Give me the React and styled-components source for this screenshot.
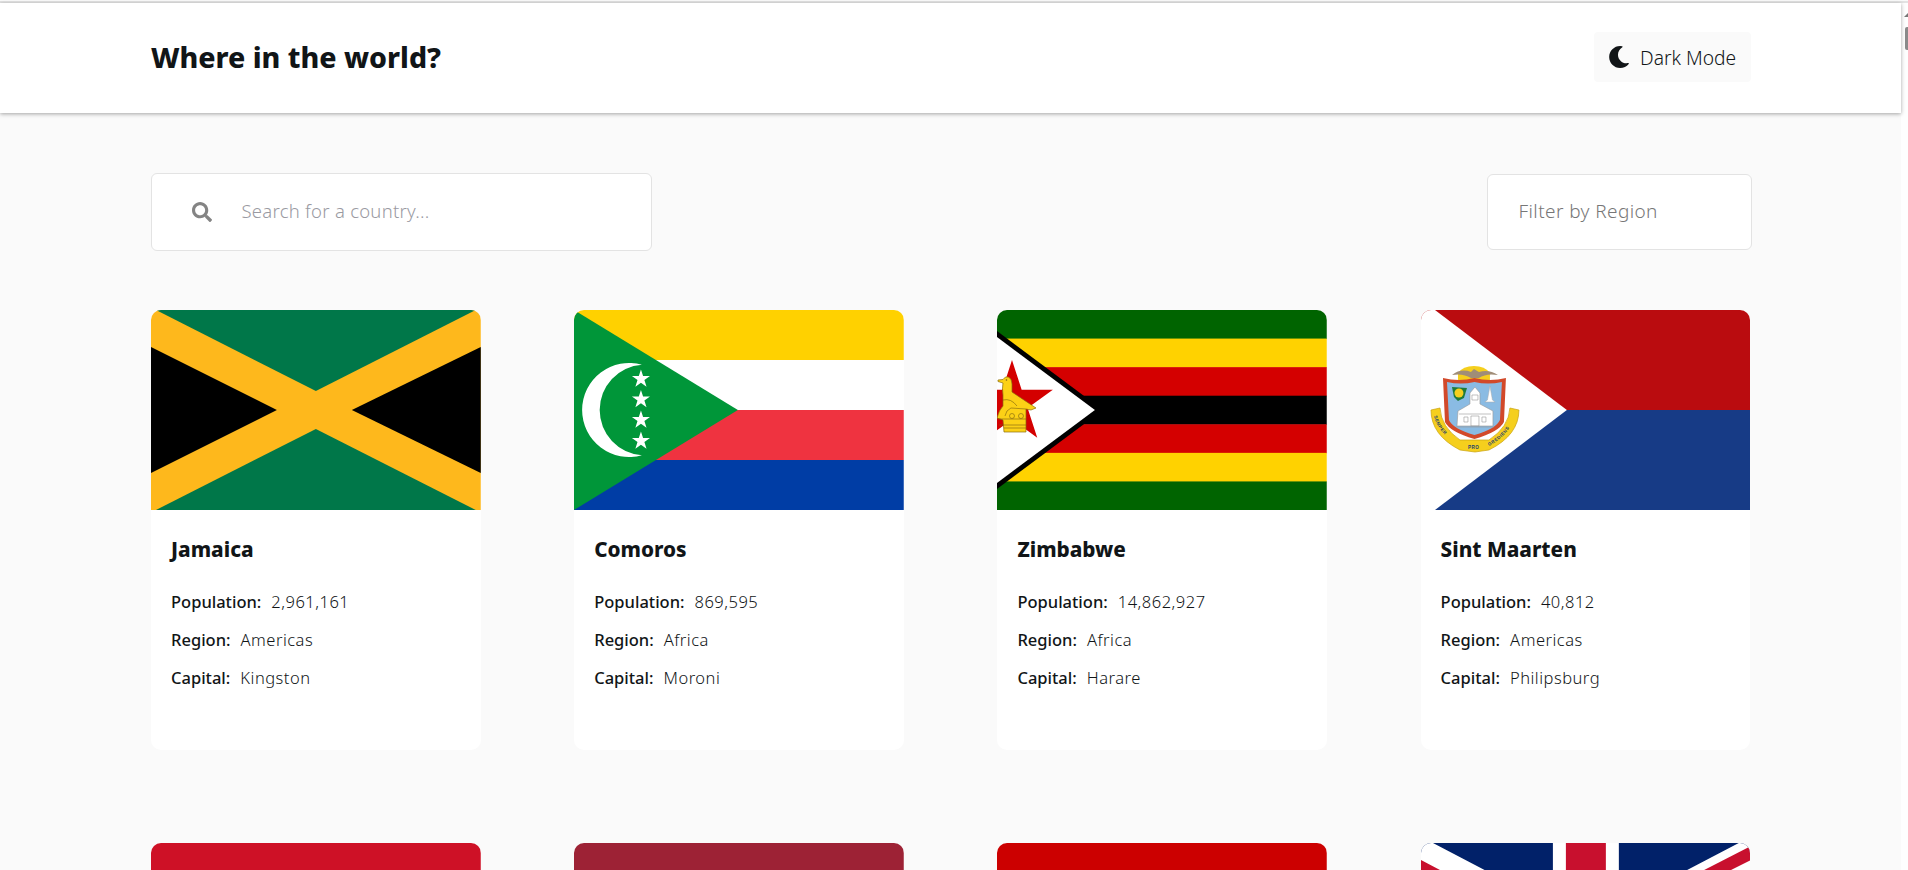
import React from "react";
import styled, { createGlobalStyle } from "styled-components";
import { FaMoon, FaSearch } from "react-icons/fa";

const FONT = `"Noto Sans", Lato, sans-serif`;

const Global = createGlobalStyle`
  html, body { margin: 0; height: 870px; overflow: hidden; background: #fafafa; }
  * { box-sizing: border-box; }
  body { font-family: ${FONT}; color: #111517; }
`;

const Shell = styled.div`
  height: 870px;
  display: flex;
  flex-direction: column;
  overflow: hidden;
`;
const TopRule = styled.div`
  flex: none;
  height: 2px;
  margin-top: 1px;
  background: #e3e3e3;
`;
const Body = styled.div`
  flex: 1;
  min-height: 0;
  display: flex;
`;
const Content = styled.div`
  flex: 1;
  min-width: 0;
  display: flex;
  flex-direction: column;
`;
const Header = styled.header`
  flex: none;
  height: 110px;
  padding: 0 150px 0 151px;
  background: #fff;
  box-shadow: 0 1px 4px rgba(0, 0, 0, 0.35);
  display: flex;
  align-items: center;
  justify-content: space-between;
  position: relative;
  z-index: 1;
`;
const Title = styled.h1`
  margin: 0 0 2px;
  font-size: 28.5px;
  font-weight: 800;
  line-height: 1.2;
  color: #111517;
`;
const ModeButton = styled.button`
  width: 157px;
  height: 50px;
  padding: 0 0 0 14px;
  border: 0;
  border-radius: 4px;
  background: #fafafa;
  color: #111517;
  display: flex;
  align-items: center;
  gap: 10px;
  font: 300 19.2px ${FONT};
  margin-top: -2px;
`;
const Main = styled.main`
  flex: 1;
  min-height: 0;
  padding: 60px 150px 0 151px;
  overflow: hidden;
`;
const Toolbar = styled.div`
  display: flex;
  align-items: center;
  justify-content: space-between;
  margin-bottom: 59px;
`;
const Search = styled.label`
  width: 501px;
  height: 78px;
  margin-left: -0.5px;
  padding-left: 40px;
  display: flex;
  align-items: center;
  gap: 30px;
  background: #fff;
  border: 1px solid #e3e3e3;
  border-radius: 6px;
  color: #848484;
`;
const SearchInput = styled.input`
  flex: 1;
  min-width: 0;
  border: 0;
  outline: 0;
  padding: 0 0 4px;
  background: transparent;
  font: 300 18.5px ${FONT};
  letter-spacing: 0.26px;
  &::placeholder { color: #9a9aa2; opacity: 1; }
`;
const Filter = styled.div`
  width: 265px;
  height: 76px;
  margin: 0 -0.5px 1px 0;
  padding: 0 0 2px 31px;
  display: flex;
  align-items: center;
  background: #fff;
  border: 1px solid #e3e3e3;
  border-radius: 6px;
  font-size: 19px;
  letter-spacing: 0.4px;
  font-weight: 300;
  color: #777;
`;
const Grid = styled.div`
  margin-right: 0.65px;
  display: grid;
  grid-template-columns: repeat(4, 329.75px);
  justify-content: space-between;
  row-gap: 93px;
`;
const Card = styled.article`
  height: ${(p) => (p.$bare ? "200px" : "440px")};
  background: #fff;
  border-radius: 10px;
  overflow: hidden;
`;
const Flag = styled.svg`
  display: block;
  width: 100%;
  height: 200px;
`;
const CardBody = styled.div`
  padding: 24px 20px 0;
`;
const CardName = styled.h2`
  margin: 0 0 18.5px;
  font-size: 20.7px;
  line-height: 30px;
  font-weight: 800;
  color: #111517;
`;
const Row = styled.p`
  margin: 0;
  height: 38px;
  display: flex;
  align-items: center;
  gap: 10px;
  font-size: 16.5px;
  font-weight: 300;
  color: #111517;
`;
const Label = styled.span`
  font-weight: 500;
`;
const Value = styled.span`
  letter-spacing: 0.5px;
`;
const ScrollTrack = styled.div`
  flex: none;
  width: 7px;
  background: #fefefe;
  display: flex;
  flex-direction: column;
  align-items: flex-end;
  padding-top: 10px;
`;
const ScrollArrow = styled.div`
  width: 0;
  height: 0;
  border-left: 4px solid transparent;
  border-bottom: 4px solid #777;
`;
const ScrollThumb = styled.div`
  width: 3px;
  height: 23px;
  margin-top: 10px;
  background: #8a8a8a;
  border-radius: 2px 0 0 2px;
`;
const Motto = styled.text`
  font-family: "Liberation Sans", sans-serif;
  font-size: 4.6px;
  font-weight: 700;
  letter-spacing: 0.5px;
  fill: #22406e;
`;

const star = (cx, cy, R, r = R * 0.382) =>
  Array.from({ length: 10 }, (_, i) => {
    const a = -Math.PI / 2 + (i * Math.PI) / 5;
    const d = i % 2 ? r : R;
    return `${(cx + d * Math.cos(a)).toFixed(2)},${(cy + d * Math.sin(a)).toFixed(2)}`;
  }).join(" ");

const Jamaica = () => (
  <Flag viewBox="0 0 330 200" preserveAspectRatio="none">
    <rect width="330" height="200" fill="#feb81c" />
    <polygon points="5,0 325,0 165,81" fill="#007749" />
    <polygon points="5,200 325,200 165,119" fill="#007749" />
    <polygon points="0,37 126,100 0,163" fill="#000" />
    <polygon points="330,37 201,100 330,163" fill="#000" />
  </Flag>
);

const Comoros = () => (
  <Flag viewBox="0 0 330 200" preserveAspectRatio="none">
    <rect width="330" height="50" fill="#ffd100" />
    <rect y="50" width="330" height="50" fill="#fff" />
    <rect y="100" width="330" height="50" fill="#ef3340" />
    <rect y="150" width="330" height="50" fill="#003da5" />
    <polygon points="0,0 164,100 0,200" fill="#009639" />
    <path d="M68,54.8 A47,47 0 1 0 68,145.2 A45.3,45.3 0 0 1 68,54.8 Z" fill="#fff" />
    {[69, 89.5, 110, 131].map((y) => (
      <polygon key={y} points={star(67, y, 9.5)} fill="#fff" />
    ))}
  </Flag>
);

const Zimbabwe = () => (
  <Flag viewBox="0 0 330 200" preserveAspectRatio="none">
    {["#006400", "#ffd200", "#d40000", "#000", "#d40000", "#ffd200", "#006400"].map((c, i) => (
      <rect key={i} y={(i * 200) / 7} width="330" height={200 / 7 + 0.5} fill={c} />
    ))}
    <polygon points="0,21 106,100 0,179" fill="#000" />
    <polygon points="0,27 98,100 0,173" fill="#fff" />
    <polygon points={star(15, 93, 43)} fill="#d40000" />
    <path
      d="M1,70 L6,69.5 Q8,66 11.5,67 Q15,69 15,74 L15,82 Q24,88 39,98 L34,100 L29,99 L29,122 L7,122 L6,110 L0,108 Q2,100 6,96 L6,85 Q5,78 6,73 L1,71.5 Z"
      fill="#fcd116"
      stroke="#8a6d10"
      strokeWidth="0.7"
    />
    <path d="M6,90 Q14,88 20,96 M29,99 L14,98 Q9,100 8,106 M1,109 L29,109 M2,115 L29,115 M7,118 L29,118" fill="none" stroke="#7a5f10" strokeWidth="0.6" />
    <circle cx="15" cy="106" r="2.5" fill="none" stroke="#7a5f10" strokeWidth="0.6" />
    <circle cx="24" cy="106" r="2.5" fill="none" stroke="#7a5f10" strokeWidth="0.6" />
    <circle cx="9.5" cy="70" r="0.8" fill="#7a5f10" />
  </Flag>
);

const SintMaarten = () => (
  <Flag viewBox="0 0 330 200" preserveAspectRatio="none">
    <rect width="330" height="100" fill="#ba0c0f" />
    <rect y="100" width="330" height="100" fill="#173b86" />
    <polygon points="0,0 14,0 146,100 14,200 0,200" fill="#fff" />
    <path d="M10,100 L19,98 Q20,117 39,130 L68,130 Q88,117 89,98 L98,100 Q98,125 68,140 L54,142 L39,140 Q10,125 10,100 Z" fill="#f5cf1d" stroke="#c9a20f" strokeWidth="0.7" />
    <defs>
      <path id="sxm-motto-l" d="M13,106 Q17,124 39,135" />
      <path id="sxm-motto-r" d="M68,136 Q90,124 95,102" />
    </defs>
    <Motto><textPath href="#sxm-motto-l">SEMPER</textPath></Motto>
    <Motto x="47" y="139">PRO</Motto>
    <Motto><textPath href="#sxm-motto-r">GREDIENS</textPath></Motto>
    <path d="M37,63 A18,13 0 0 1 69,63 L69,70 L37,70 Z" fill="#f5cf1d" />
    <path d="M31,65 Q40,58 50,62 L53,59 L58,62 Q68,59 77,65 Q65,63 58,68 L50,68 Q42,63 31,65 Z" fill="#a08d78" />
    <path d="M22,68 Q38,72 53.5,68 Q69,72 85,68 L83,112 Q78,122 53.5,129 Q29,122 24,112 Z" fill="#d2492a" />
    <path d="M26,72 Q40,75 53.5,72 Q67,75 81,72 L79,110 Q75,119 53.5,125 Q32,119 28,110 Z" fill="#8abbe3" />
    <path d="M31,77 L46,78 L43,88 L37,91 L33,87 Z" fill="#1f7a3a" />
    <circle cx="38" cy="83" r="4.5" fill="#f5cf1d" />
    <path d="M66.5,90 L69,76 L71.5,90 L74,92 L64,92 Z" fill="#fff" stroke="#aaa" strokeWidth="0.5" />
    <path d="M49,94 L49,83 L54,77 L59,83 L59,94 L72,101 L72,116 L36,116 L37,101 Z" fill="#fff" stroke="#999" strokeWidth="0.6" />
    <path d="M35,117 L73,117 M38,104 L70,104 M43,107 H47 V112 H43 Z M61,107 H65 V112 H61 Z M50,106 H58 V116 H50 Z M51,85 H57 V90 H51 Z" fill="none" stroke="#999" strokeWidth="0.6" />
  </Flag>
);

const Plain = ({ color }) => (
  <Flag viewBox="0 0 330 200" preserveAspectRatio="none">
    <rect width="330" height="200" fill={color} />
  </Flag>
);

const Britain = () => (
  <Flag viewBox="0 0 330 200" preserveAspectRatio="none">
    <rect width="330" height="200" fill="#012169" />
    <polygon points="0,0 12,0 165,80 318,0 330,0 330,34 198,100 330,166 330,200 318,200 165,120 12,200 0,200 0,166 132,100 0,34" fill="#fff" />
    <polygon points="0,17 19,27 165,100 140,100 0,30" fill="#c8102e" />
    <polygon points="330,3 165,88 190,88 330,17" fill="#c8102e" />
    <rect x="132" width="66" height="200" fill="#fff" />
    <rect y="67" width="330" height="66" fill="#fff" />
    <rect x="145" width="40" height="200" fill="#c8102e" />
    <rect y="80" width="330" height="40" fill="#c8102e" />
  </Flag>
);

const countries = [
  { name: "Jamaica", population: "2,961,161", region: "Americas", capital: "Kingston", flag: <Jamaica /> },
  { name: "Comoros", population: "869,595", region: "Africa", capital: "Moroni", flag: <Comoros /> },
  { name: "Zimbabwe", population: "14,862,927", region: "Africa", capital: "Harare", flag: <Zimbabwe /> },
  { name: "Sint Maarten", population: "40,812", region: "Americas", capital: "Philipsburg", flag: <SintMaarten /> },
];
const nextRow = [<Plain color="#ce1126" />, <Plain color="#9d2235" />, <Plain color="#cc0000" />, <Britain />];

export default function App() {
  return (
    <>
      <Global />
      <Shell>
        <TopRule />
        <Body>
          <Content>
            <Header>
              <Title>Where in the world?</Title>
              <ModeButton>
                <FaMoon size={22} />
                Dark Mode
              </ModeButton>
            </Header>
            <Main>
              <Toolbar>
                <Search>
                  <FaSearch size={20} />
                  <SearchInput placeholder="Search for a country..." />
                </Search>
                <Filter>Filter by Region</Filter>
              </Toolbar>
              <Grid>
                {countries.map((c) => (
                  <Card key={c.name}>
                    {c.flag}
                    <CardBody>
                      <CardName>{c.name}</CardName>
                      <Row><Label>Population:</Label><Value>{c.population}</Value></Row>
                      <Row><Label>Region:</Label><Value>{c.region}</Value></Row>
                      <Row><Label>Capital:</Label><Value>{c.capital}</Value></Row>
                    </CardBody>
                  </Card>
                ))}
                {nextRow.map((f, i) => (
                  <Card key={i} $bare>{f}</Card>
                ))}
              </Grid>
            </Main>
          </Content>
          <ScrollTrack>
            <ScrollArrow />
            <ScrollThumb />
          </ScrollTrack>
        </Body>
      </Shell>
    </>
  );
}
